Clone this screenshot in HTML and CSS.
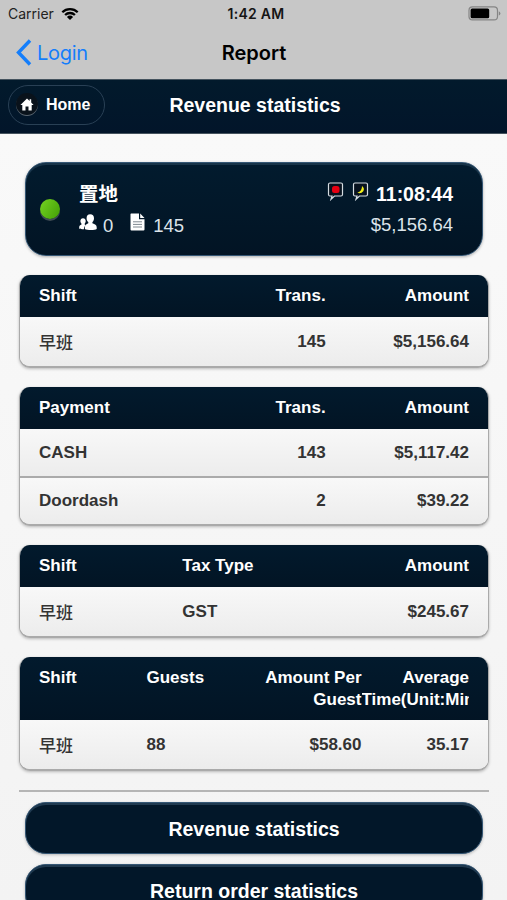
FILE: index.html
```html
<!DOCTYPE html>
<html lang="en">
<head>
    <meta charset="UTF-8">
    <meta name="viewport" content="width=device-width, initial-scale=1.0">
    <title>Report</title>
    <link rel="stylesheet" href="styles.css">
</head>
<body>
    <!-- status bar + navigation -->
    <div class="topbar">
        <div class="status">
            <div class="carrier">
                <span>Carrier</span>
                <svg width="18" height="14" viewBox="0 0 18 14">
                    <path d="M1.3 5.2a11 11 0 0 1 15.4 0M4.1 8a7 7 0 0 1 9.8 0" fill="none" stroke="#000" stroke-width="2.3"/>
                    <path d="M9 13L5.9 9.9a4.4 4.4 0 0 1 6.2 0z" fill="#000"/>
                </svg>
            </div>
            <div class="clock">1:42 AM</div>
            <div class="battery">
                <svg width="33" height="15" viewBox="0 0 33 15">
                    <rect x="1" y=".9" width="28.5" height="13" rx="3.5" fill="none" stroke="#858585" stroke-width="1.2"/>
                    <rect x="2.6" y="2.5" width="18.6" height="9.8" rx="1.5" fill="#000"/>
                    <path d="M30.8 5.3q1.6.7 1.6 2.1t-1.6 2.1z" fill="#858585"/>
                </svg>
            </div>
        </div>
        <div class="nav">
            <a href="#" class="back">
                <svg width="16" height="27" viewBox="0 0 16 27"><path d="M14 1.5L2.5 13.5 14 25.5" fill="none" stroke="#147efb" stroke-width="3.4"/></svg>
                <span>Login</span>
            </a>
            <div class="nav-title">Report</div>
        </div>
    </div>

    <header class="header">
        <a href="#" class="home">
            <span class="home-icon">
                <svg width="14" height="13" viewBox="0 0 14 13"><path d="M7 .4L.4 6.9h1.9v5.5h3.200V8.500h3v3.900h3.200V6.900h1.900L11.200 4.500V1.300H9.600v1.600z" fill="#fff"/></svg>
            </span>
            Home
        </a>
        <h1>Revenue statistics</h1>
    </header>

    <div class="content">
        <!-- store summary -->
        <div class="summary">
            <span class="dot"></span>
            <div class="store">
                <div class="store-name">置地</div>
                <div class="counts">
                    <svg class="people" width="18" height="17" viewBox="0 0 18 17">
                        <path d="M11.2.2c2.4 0 3.8 1.6 3.8 4 0 1.7-.7 3.1-1.6 3.9v1.2c2.5.9 4.3 1.9 4.3 4v1.6c-1.6 1.3-9.8 1.3-11.8 0v-1.6c0-2 1.4-3.1 3.4-4V8.1c-1-.8-1.7-2.2-1.7-3.9 0-2.4 1.2-4 3.6-4z" fill="#fff"/>
                        <path d="M4 4.300c1.700 0 2.700 1.100 2.700 2.800 0 1.200-.4 2-1 2.600v.9l1.200.6c-1.400 1-2 2.300-2 4.100-2.100 0-4-.2-4.700-.8v-1.200c0-1.400.9-2.100 2.300-2.700v-.9c-.7-.6-1.100-1.400-1.100-2.600 0-1.700 1-2.800 2.600-2.800z" fill="#fff"/>
                    </svg>
                    <span class="guests">0</span>
                    <svg class="doc" width="15" height="18" viewBox="0 0 15 18">
                        <path d="M1 .5h8v5.700h5.500v10.300a1 1 0 0 1-1 1H1.500a1 1 0 0 1-1-1V1z" fill="#fff"/>
                        <path d="M10.200.6l4.300 4.400h-4.300z" fill="#fff"/>
                        <path d="M3 8.800h9M3 11.400h9M3 14h9" stroke="#7f8890" stroke-width="1"/>
                    </svg>
                    <span>145</span>
                </div>
            </div>
            <div class="totals">
                <div class="time">
                    <svg width="17" height="19" viewBox="0 0 17 19">
                        <path d="M3 1h11q1.500 0 1.500 1.500v10q0 1.500-1.500 1.500H7.500L4 17.300 5 14H3q-1.500 0-1.500-1.500v-10Q1.500 1 3 1z" fill="#07121f" stroke="#d5dce2" stroke-width="1.200"/>
                        <rect x="5" y="4" width="7.500" height="7" rx="2.500" fill="#e60012"/>
                    </svg>
                    <svg class="moon" width="17" height="19" viewBox="0 0 17 19">
                        <path d="M3 1h11q1.500 0 1.500 1.500v10q0 1.500-1.500 1.500H7.500L4 17.300 5 14H3q-1.500 0-1.500-1.500v-10Q1.500 1 3 1z" fill="#07121f" stroke="#d5dce2" stroke-width="1.200"/>
                        <path d="M10 4q3 2.500 1.300 5.200Q9 12.300 5.300 10.800 10.200 9 10 4z" fill="#f0ee18"/>
                    </svg>
                    <b>11:08:44</b>
                </div>
                <div class="money">$5,156.64</div>
            </div>
        </div>

        <div class="list">
            <div class="row head"><span>Shift</span><span class="right">Trans.</span><span class="right">Amount</span></div>
            <div class="row"><span class="cjk">早班</span><span class="right">145</span><span class="right">$5,156.64</span></div>
        </div>

        <div class="list">
            <div class="row head"><span>Payment</span><span class="right">Trans.</span><span class="right">Amount</span></div>
            <div class="row short"><span>CASH</span><span class="right">143</span><span class="right">$5,117.42</span></div>
            <div class="row short"><span>Doordash</span><span class="right">2</span><span class="right">$39.22</span></div>
        </div>

        <div class="list">
            <div class="row head"><span>Shift</span><span>Tax Type</span><span class="right">Amount</span></div>
            <div class="row"><span class="cjk">早班</span><span>GST</span><span class="right">$245.67</span></div>
        </div>

        <div class="list">
            <div class="row four head tall"><span>Shift</span><span>Guests</span><span class="right">Amount Per Guest</span><span class="right clip">Average Time(Unit:Min)</span></div>
            <div class="row four"><span class="cjk">早班</span><span>88</span><span class="right">$58.60</span><span class="right">35.17</span></div>
        </div>

        <hr>

        <a href="#" class="btn">Revenue statistics</a>
        <a href="#" class="btn">Return order statistics</a>
    </div>
</body>
</html>
```

FILE: styles.css
```css
* {
    box-sizing: border-box;
}
body {
    margin: 0;
    height: 900px;
    overflow: hidden;
    display: flex;
    flex-direction: column;
    background-color: #f5f5f5;
    font-family: "Liberation Sans", "Noto Sans CJK SC", Arial, sans-serif;
}
a {
    text-decoration: none;
}
svg {
    display: block;
    flex: none;
}
.topbar {
    height: 79px;
    flex: none;
    background-color: #c7c7c7;
    font-family: Inter, sans-serif;
    color: #000;
}
.status {
    display: grid;
    grid-template-columns: 1fr auto 1fr;
    align-items: center;
    height: 27px;
    padding: 0 6px 0 8px;
    font-size: 14px;
}
.carrier {
    display: flex;
    align-items: center;
    gap: 7px;
    color: #222;
}
.clock {
    padding-left: 3px;
    font-weight: 600;
    color: #151515;
    letter-spacing: 0.3px;
}
.battery {
    display: flex;
    justify-content: flex-end;
}
.nav {
    display: grid;
    grid-template-columns: 1fr auto 1fr;
    align-items: center;
    height: 51px;
    padding: 0 15px 0 16px;
    font-size: 20px;
}
.back {
    display: flex;
    align-items: center;
    gap: 5px;
    color: #147efb;
    letter-spacing: -0.3px;
}
.nav-title {
    font-weight: 600;
}
.header {
    display: grid;
    grid-template-columns: 1fr auto 1fr;
    align-items: center;
    flex: none;
    height: 55px;
    padding: 0 5px 2px 8px;
    background: linear-gradient(#021a2c, #02152a);
    border-top: 1px solid #45535e;
    border-bottom: 1px solid #45535e;
    color: #fff;
}
.header h1 {
    margin: 0;
    font-size: 19.5px;
}
.home {
    display: flex;
    align-items: center;
    gap: 8px;
    justify-self: start;
    width: 97px;
    height: 40px;
    margin-top: -1px;
    padding-left: 7px;
    border: 1px solid #294055;
    border-radius: 20px;
    color: #fff;
    font-size: 16px;
    font-weight: bold;
}
.home-icon {
    display: flex;
    align-items: center;
    justify-content: center;
    width: 22px;
    height: 22px;
    margin-top: -2px;
    border-radius: 50%;
    background-color: #09121b;
    box-shadow: 0 1px 0 #5b6670;
}
.content {
    flex: 1;
    min-height: 0;
    overflow: hidden;
    padding: 28px 18px 0 19px;
    background: linear-gradient(#f9f9f9, #f3f3f3);
}
.summary {
    display: flex;
    align-items: center;
    height: 94px;
    margin: 0 6px 19px;
    padding: 0 29px 0 14px;
    background: linear-gradient(#021b2e, #021424);
    border: 1px solid #345674;
    border-radius: 21px;
    box-shadow: inset 0 2px 0 #183449, 0 1px 3px rgba(0, 0, 0, 0.3);
    color: #fff;
}
.dot {
    width: 20px;
    height: 20px;
    margin: 0 19px 0 0;
    border-radius: 50%;
    background: linear-gradient(120deg, #75d322, #429e06);
    box-shadow: 0 2px 0 #3f4b54;
}
.store {
    flex: 1;
}
.store-name {
    height: 32px;
    font-size: 19.5px;
    font-weight: bold;
    line-height: 34px;
}
.counts {
    display: flex;
    align-items: center;
    height: 32px;
    padding-top: 2px;
    color: #dce4ea;
    font-size: 18.5px;
}
.people, .doc {
    margin-bottom: 8px;
}
.guests {
    margin: 0 17px 0 6px;
}
.doc {
    margin-right: 8px;
}
.time {
    display: flex;
    align-items: center;
    justify-content: flex-end;
    height: 32px;
    font-size: 19.5px;
}
.time svg {
    margin-bottom: 5px;
}
.time .moon {
    margin: 0 7px 5px 8px;
}
.money {
    height: 30px;
    color: #dce4ea;
    font-size: 18.5px;
    line-height: 30px;
    text-align: right;
}
.list {
    margin-bottom: 19px;
    border: 1px solid #aaa;
    border-bottom: 2px solid #aaa;
    border-top: 0;
    border-radius: 11px;
    overflow: hidden;
    box-shadow: 0 1px 3px rgba(0, 0, 0, 0.25);
}
.row {
    display: grid;
    grid-template-columns: 1fr 1fr 1fr;
    align-items: center;
    height: 49px;
    padding: 0 19px;
    background: linear-gradient(#f8f8f8, #ececec);
    color: #333;
    font-size: 17px;
    font-weight: bold;
    line-height: 22px;
}
.row.four {
    grid-template-columns: repeat(4, minmax(0, 1fr));
}
.row.short {
    height: 47px;
}
.row.short + .short {
    height: 48px;
    border-top: 2px solid #aaa;
}
.row.head {
    height: 42px;
    background: linear-gradient(#021a2d, #021424);
    color: #fff;
}
.row.tall {
    align-items: start;
    height: 63px;
    padding-top: 10px;
}
.cjk {
    font-family: "Noto Sans CJK SC", sans-serif;
    font-weight: 500;
}
.right {
    text-align: right;
}
.clip {
    overflow: hidden;
}
hr {
    height: 2px;
    margin: 0 0 10px;
    border: 0;
    background-color: #b5b5b5;
}
.btn {
    display: flex;
    align-items: center;
    justify-content: center;
    height: 52px;
    margin: 0 6px 10px;
    padding-top: 2px;
    background-color: #021729;
    border: 1px solid #345674;
    border-radius: 21px;
    box-shadow: inset 0 2px 0 #203a50, 0 1px 3px rgba(0, 0, 0, 0.25);
    color: #fff;
    font-size: 19.5px;
    font-weight: bold;
}
```
